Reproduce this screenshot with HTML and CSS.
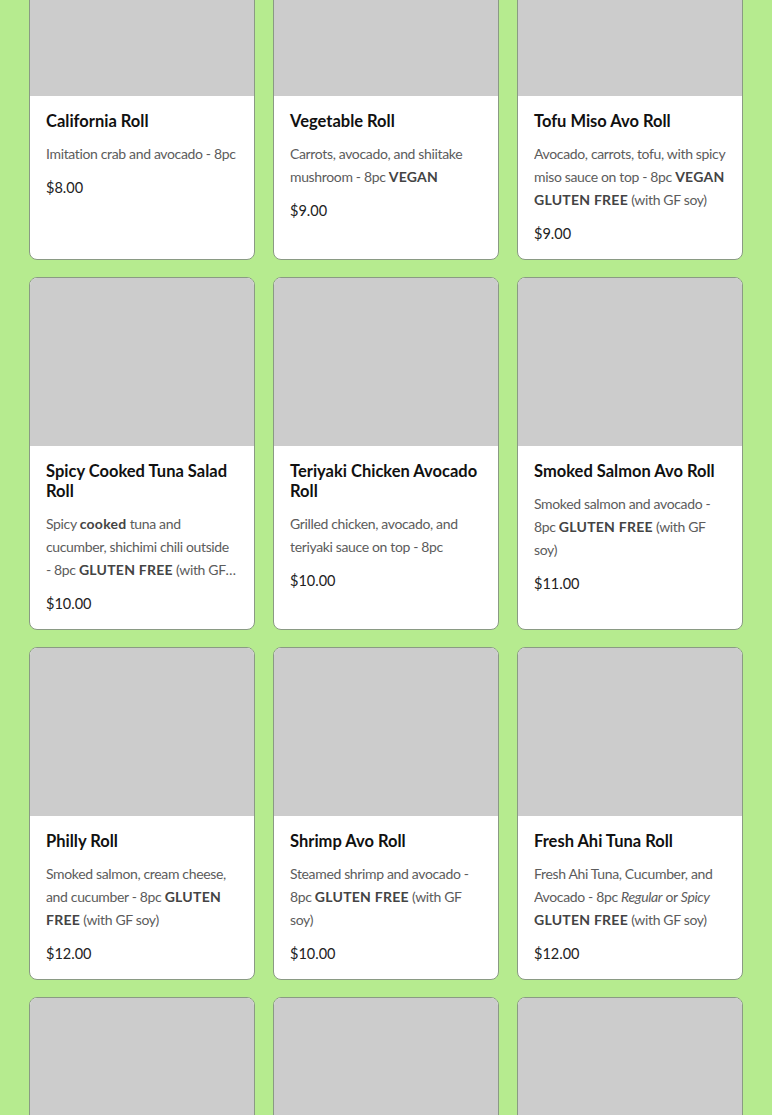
FILE: index.html
```html
<!DOCTYPE html>
<html lang="en">
<head>
<meta charset="utf-8">
<title>Rolls</title>
<link rel="stylesheet" href="styles.css">
</head>
<body>
<main class="menu">
  <article class="card">
    <div class="thumb"></div>
    <div class="body">
      <h3 class="name">California Roll</h3>
      <p class="desc">Imitation crab and avocado - 8pc</p>
      <p class="price">$8.00</p>
    </div>
  </article>
  <article class="card">
    <div class="thumb"></div>
    <div class="body">
      <h3 class="name">Vegetable Roll</h3>
      <p class="desc">Carrots, avocado, and shiitake mushroom - 8pc <strong>VEGAN</strong></p>
      <p class="price">$9.00</p>
    </div>
  </article>
  <article class="card">
    <div class="thumb"></div>
    <div class="body">
      <h3 class="name">Tofu Miso Avo Roll</h3>
      <p class="desc">Avocado, carrots, tofu, with spicy miso sauce on top - 8pc <strong>VEGAN GLUTEN FREE</strong> (with GF soy)</p>
      <p class="price">$9.00</p>
    </div>
  </article>

  <article class="card">
    <div class="thumb"></div>
    <div class="body">
      <h3 class="name">Spicy Cooked Tuna Salad Roll</h3>
      <p class="desc">Spicy <strong>cooked</strong> tuna and cucumber, shichimi chili outside <span class="keep">- 8pc</span> <strong>GLUTEN FREE</strong> (with GF soy)</p>
      <p class="price">$10.00</p>
    </div>
  </article>
  <article class="card">
    <div class="thumb"></div>
    <div class="body">
      <h3 class="name">Teriyaki Chicken Avocado Roll</h3>
      <p class="desc">Grilled chicken, avocado, and teriyaki sauce on top - 8pc</p>
      <p class="price">$10.00</p>
    </div>
  </article>
  <article class="card">
    <div class="thumb"></div>
    <div class="body">
      <h3 class="name">Smoked Salmon Avo Roll</h3>
      <p class="desc">Smoked salmon and avocado - 8pc <strong>GLUTEN FREE</strong> (with GF soy)</p>
      <p class="price">$11.00</p>
    </div>
  </article>

  <article class="card">
    <div class="thumb"></div>
    <div class="body">
      <h3 class="name">Philly Roll</h3>
      <p class="desc">Smoked salmon, cream cheese, and cucumber - 8pc <strong>GLUTEN FREE</strong> (with GF soy)</p>
      <p class="price">$12.00</p>
    </div>
  </article>
  <article class="card">
    <div class="thumb"></div>
    <div class="body">
      <h3 class="name">Shrimp Avo Roll</h3>
      <p class="desc">Steamed shrimp and avocado - 8pc <strong>GLUTEN FREE</strong> (with GF soy)</p>
      <p class="price">$10.00</p>
    </div>
  </article>
  <article class="card">
    <div class="thumb"></div>
    <div class="body">
      <h3 class="name">Fresh Ahi Tuna Roll</h3>
      <p class="desc">Fresh Ahi Tuna, Cucumber, and Avocado - 8pc <em>Regular</em> or <em>Spicy</em> <strong>GLUTEN FREE</strong> (with GF soy)</p>
      <p class="price">$12.00</p>
    </div>
  </article>

  <article class="card">
    <div class="thumb"></div>
    <div class="body">
      <h3 class="name">&nbsp;</h3>
    </div>
  </article>
  <article class="card">
    <div class="thumb"></div>
    <div class="body">
      <h3 class="name">&nbsp;</h3>
    </div>
  </article>
  <article class="card">
    <div class="thumb"></div>
    <div class="body">
      <h3 class="name">&nbsp;</h3>
    </div>
  </article>
</main>
</body>
</html>
```

FILE: styles.css
```css
html, body {
  margin: 0;
  padding: 0;
  background: #b6eb8f;
}

body {
  font-family: "Lato", "Liberation Sans", sans-serif;
  overflow: hidden;
}

.menu {
  display: grid;
  grid-template-columns: repeat(3, 1fr);
  column-gap: 18px;
  row-gap: 17px;
  padding: 0 29px;
  margin-top: -73px;
}

.card {
  background: #ffffff;
  border: 1px solid #8a9a84;
  border-radius: 8px;
  overflow: hidden;
  display: flex;
  flex-direction: column;
}

.thumb {
  height: 168px;
  background: #cccccc;
  flex: none;
}

.body {
  padding: 15px 16px 15px;
  display: flex;
  flex-direction: column;
}

.name {
  margin: 0 0 11px;
  font-size: 16.5px;
  line-height: 20px;
  font-weight: 700;
  color: #111111;
}

.desc {
  margin: 0 0 13px;
  font-size: 14px;
  line-height: 23px;
  letter-spacing: -0.35px;
  color: #5c5c5c;
  display: -webkit-box;
  -webkit-line-clamp: 3;
  -webkit-box-orient: vertical;
  overflow: hidden;
}

.desc strong {
  font-weight: 700;
  letter-spacing: 0.25px;
  color: #444444;
}

.desc em {
  font-style: italic;
}

.keep {
  white-space: nowrap;
}

.price {
  margin: 0;
  font-size: 14.5px;
  line-height: 20px;
  color: #222222;
}
```
